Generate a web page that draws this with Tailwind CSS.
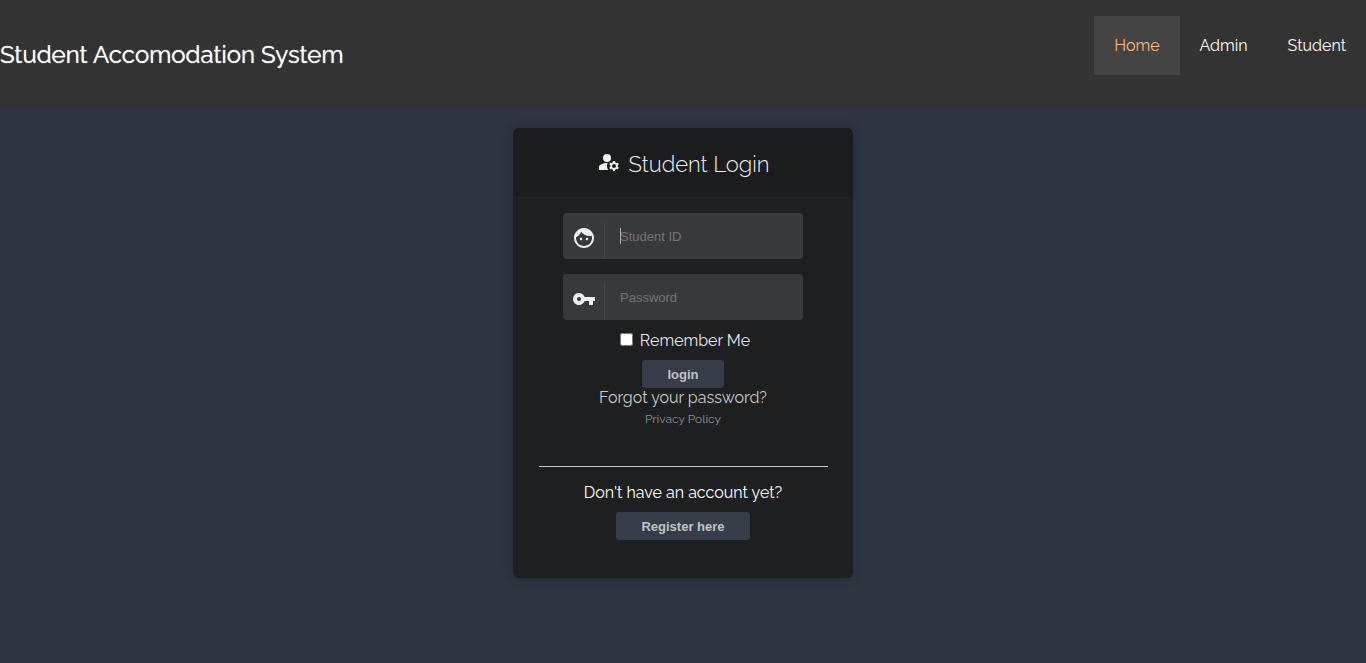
<!DOCTYPE html>
<html lang="en">
<head>
<meta charset="utf-8">
<meta name="viewport" content="width=device-width, initial-scale=1">
<title>Student Accomodation System</title>
<script src="https://cdn.jsdelivr.net/npm/@tailwindcss/browser@4"></script>
</head>
<body class="min-h-screen bg-[#2f3541] font-['Raleway','Lato',sans-serif] text-base text-white">
<header class="flex items-start justify-between bg-[#333] pt-4 pb-[34px]">
  <h1 class="pt-5 text-2xl leading-[38px] [text-shadow:0_0_1px_#fff]">Student Accomodation System</h1>
  <nav class="flex leading-[19px]">
    <a href="#" class="bg-[#444] p-5 text-[#ffb77a]">Home</a>
    <a href="#" class="p-5">Admin</a>
    <a href="#" class="p-5">Student</a>
  </nav>
</header>
<main class="flex justify-center py-[19px]">
  <section class="w-full max-w-[340px] rounded-md bg-[#1e1f21] pb-[38px] text-center shadow-[0_0_12px_rgba(0,0,0,0.2)]">
    <h2 class="flex h-[70px] items-center justify-center gap-2 rounded-md border-b border-[#222426] bg-[#1b1c1e] pt-1 text-[22px] font-light text-[#f2f2f2]">
      <svg class="mb-1.5 size-6" viewBox="0 0 24 24" fill="currentColor" aria-hidden="true"><circle cx="10" cy="8" r="4"/><path d="M10.67 13.02C10.45 13.01 10.23 13 10 13c-2.42 0-4.68.67-6.61 1.82C2.51 15.34 2 16.32 2 17.35V20h9.26c-.79-1.13-1.26-2.51-1.26-4 0-1.07.25-2.07.67-2.98zM20.75 16c0-.22-.03-.42-.06-.63l1.14-1.01-1-1.73-1.45.49c-.32-.27-.68-.48-1.08-.63L18 11h-2l-.3 1.49c-.4.15-.76.36-1.08.63l-1.45-.49-1 1.73 1.14 1.01c-.03.21-.06.41-.06.63s.03.42.06.63l-1.14 1.01 1 1.73 1.45-.49c.32.27.68.48 1.08.63L16 21h2l.3-1.49c.4-.15.76-.36 1.08-.63l1.45.49 1-1.73-1.14-1.01c.03-.21.06-.41.06-.63zM17 18c-1.1 0-2-.9-2-2s.9-2 2-2 2 .9 2 2-.9 2-2 2z"/></svg>
      Student Login
    </h2>
    <form class="flex flex-col items-center pt-[15px]">
      <div class="relative flex h-[46px] w-60 items-end rounded bg-[#373a3d]">
        <label for="sid" class="flex h-[38px] w-[42px] items-center justify-center border-r border-[#43464a] pb-1 text-[#f2f2f2]">
          <svg class="size-6" viewBox="0 0 24 24" fill="currentColor" role="img" aria-label="Student ID"><path d="M9 11.75c-.69 0-1.25.56-1.25 1.25s.56 1.25 1.25 1.25 1.25-.56 1.25-1.25-.56-1.25-1.25-1.25zm6 0c-.69 0-1.25.56-1.25 1.25s.56 1.25 1.25 1.25 1.25-.56 1.25-1.25-.56-1.25-1.25-1.25zM12 2C6.48 2 2 6.48 2 12s4.48 10 10 10 10-4.48 10-10S17.52 2 12 2zm0 18c-4.41 0-8-3.59-8-8 0-.29.02-.58.05-.86 2.36-1.05 4.23-2.98 5.21-5.37C11.07 8.33 14.05 10 17.42 10c.78 0 1.53-.09 2.25-.26.21.71.33 1.47.33 2.26 0 4.41-3.59 8-8 8z"/></svg>
        </label>
        <input id="sid" type="text" placeholder="Student ID" class="h-full min-w-0 flex-1 px-[15px] font-['Liberation_Sans',sans-serif] text-[13px] outline-none placeholder:text-[#757575]">
        <span class="absolute top-[15px] left-[57px] h-4 w-px bg-[#b0b0b0]"></span>
      </div>
      <div class="mt-[15px] flex h-[46px] w-60 items-end rounded bg-[#373a3d]">
        <label for="pwd" class="flex h-[38px] w-[42px] items-center justify-center border-r border-[#43464a] pb-1 text-[#f2f2f2]">
          <svg class="size-6" viewBox="0 0 24 24" fill="currentColor" role="img" aria-label="Password"><path d="M12.65 10C11.83 7.67 9.61 6 7 6c-3.31 0-6 2.69-6 6s2.69 6 6 6c2.61 0 4.83-1.67 5.65-4H17v4h4v-4h2v-4H12.65zM7 14c-1.1 0-2-.9-2-2s.9-2 2-2 2 .9 2 2-.9 2-2 2z"/></svg>
        </label>
        <input id="pwd" type="password" placeholder="Password" class="h-full min-w-0 flex-1 px-[15px] font-['Liberation_Sans',sans-serif] text-[13px] outline-none placeholder:text-[#757575]">
      </div>
      <label class="mt-[11px] ml-1 flex h-5 items-center gap-[7px] text-[#e6e6e6]"><input type="checkbox" class="mb-1 size-[13px]">Remember Me</label>
      <button type="submit" class="mt-[9px] h-7 rounded-[3px] bg-[#373c49] px-[25px] pt-0.5 font-['Liberation_Sans',sans-serif] text-[13px] font-bold text-[#c2c2c4]">login</button>
      <a href="#" class="leading-[19px] text-[#c8c8c8]">Forgot your password?</a>
      <a href="#" class="mt-1 text-xs leading-4 text-[#919191]">Privacy Policy</a>
    </form>
    <hr class="mr-[25px] ml-[26px] mt-[39px] border-[#c8c8c8]">
    <p class="mt-4 leading-[19px]">Don't have an account yet?</p>
    <button type="button" class="mt-2.5 h-7 rounded-[3px] bg-[#373c49] px-[25px] pt-0.5 font-['Liberation_Sans',sans-serif] text-[13px] font-bold text-[#c2c2c4]">Register here</button>
  </section>
</main>
</body>
</html>
